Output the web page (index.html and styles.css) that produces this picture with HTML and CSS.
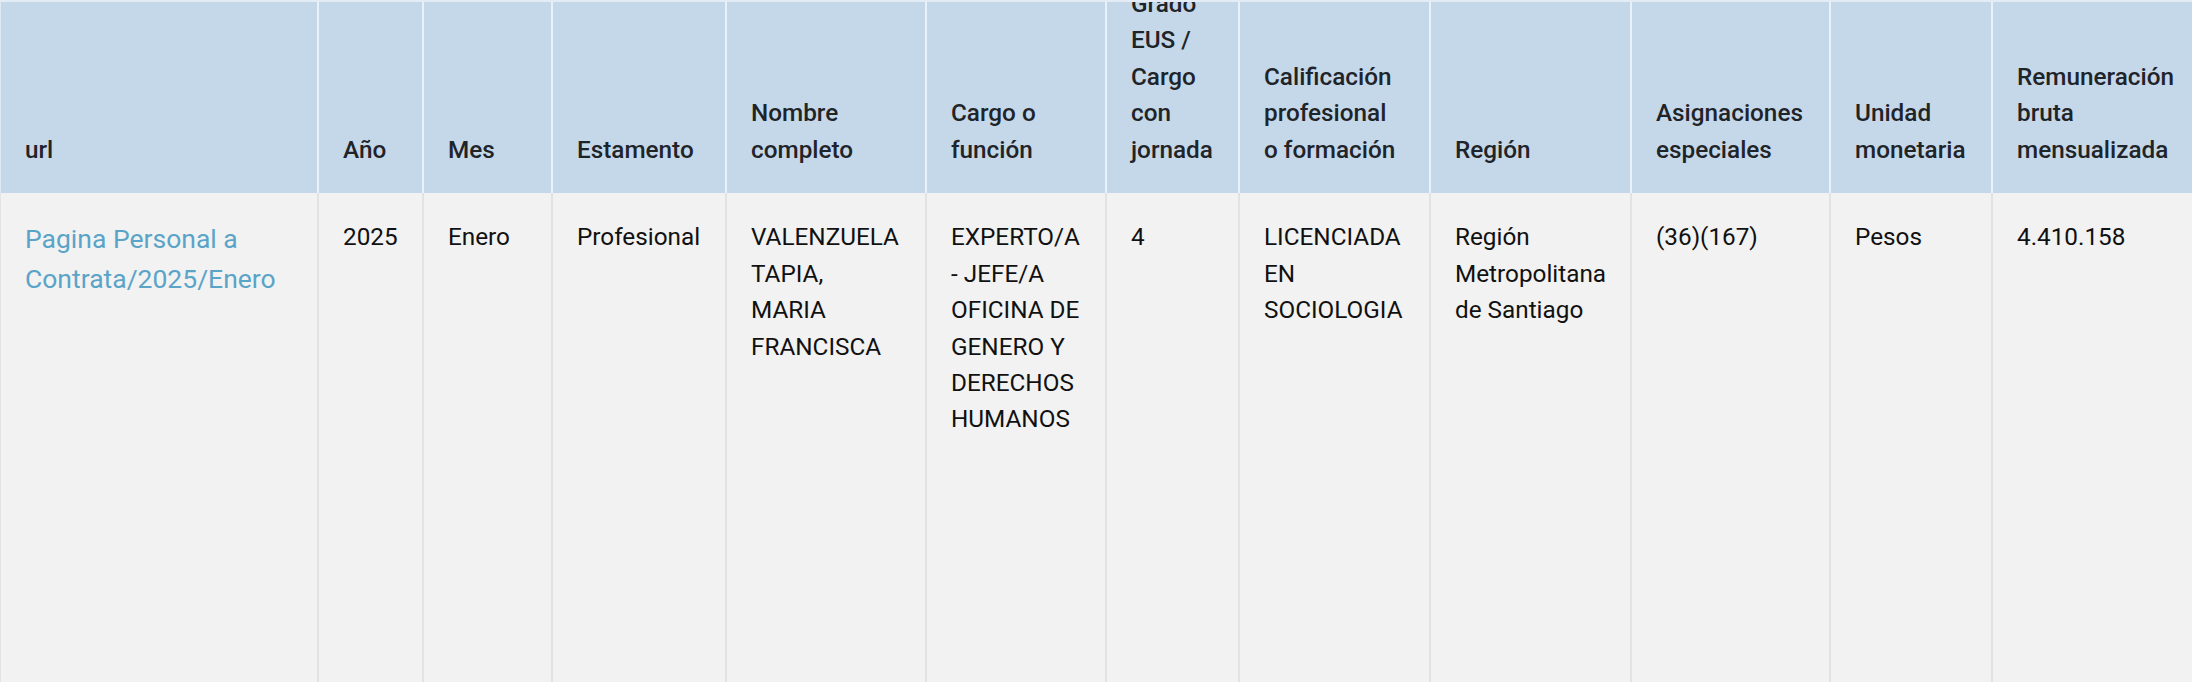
FILE: index.html
```html
<!DOCTYPE html>
<html lang="es">
<head>
<meta charset="utf-8">
<title>Personal a Contrata</title>
<link rel="stylesheet" href="styles.css">
</head>
<body>
<div class="table-wrap">
  <table class="data-table">
    <colgroup>
      <col class="c-url">
      <col class="c-anio">
      <col class="c-mes">
      <col class="c-estamento">
      <col class="c-nombre">
      <col class="c-cargo">
      <col class="c-grado">
      <col class="c-calif">
      <col class="c-region">
      <col class="c-asig">
      <col class="c-unidad">
      <col class="c-remu">
    </colgroup>
    <thead>
      <tr>
        <th>url</th>
        <th>Año</th>
        <th>Mes</th>
        <th>Estamento</th>
        <th>Nombre completo</th>
        <th>Cargo o función</th>
        <th>Grado EUS / Cargo con jornada</th>
        <th>Calificación profesional o formación</th>
        <th>Región</th>
        <th>Asignaciones especiales</th>
        <th>Unidad monetaria</th>
        <th>Remuneración bruta mensualizada</th>
      </tr>
    </thead>
    <tbody>
      <tr>
        <td><a class="row-link" href="#">Pagina Personal a Contrata/2025/Enero</a></td>
        <td>2025</td>
        <td>Enero</td>
        <td>Profesional</td>
        <td>VALENZUELA TAPIA, MARIA FRANCISCA</td>
        <td>EXPERTO/A - JEFE/A OFICINA DE GENERO Y DERECHOS HUMANOS</td>
        <td>4</td>
        <td>LICENCIADA EN SOCIOLOGIA</td>
        <td>Región Metropolitana de Santiago</td>
        <td>(36)(167)</td>
        <td>Pesos</td>
        <td>4.410.158</td>
      </tr>
    </tbody>
  </table>
</div>
</body>
</html>
```

FILE: styles.css
```css
html, body {
  margin: 0;
  padding: 0;
  background: #f2f2f2;
}

body {
  font-family: Roboto, "Liberation Sans", Arial, sans-serif;
  overflow: hidden;
}

.table-wrap {
  width: 100%;
  height: 682px;
  overflow: hidden;
  border-top: 2px solid #e3ecf5;
  box-sizing: border-box;
}

.data-table {
  table-layout: fixed;
  width: 2231px;
  border-collapse: separate;
  border-spacing: 0;
  margin-top: -40px;
}

.c-url { width: 317px; }
.c-anio { width: 105px; }
.c-mes { width: 129px; }
.c-estamento { width: 174px; }
.c-nombre { width: 200px; }
.c-cargo { width: 180px; }
.c-grado { width: 133px; }
.c-calif { width: 191px; }
.c-region { width: 201px; }
.c-asig { width: 199px; }
.c-unidad { width: 162px; }
.c-remu { width: 240px; }

.data-table th {
  background: #c5d8ea;
  color: #1f2429;
  font-size: 24.3px;
  font-weight: 500;
  line-height: 1.5;
  text-align: left;
  vertical-align: bottom;
  padding: 24px 26px 25px 24px;
  border-left: 2px solid #eaf1f8;
}

.data-table th:first-child {
  border-left: 1px solid #dfe8f1;
}

.data-table td {
  background: #f2f2f2;
  color: #111;
  font-size: 24.3px;
  font-weight: 400;
  line-height: 1.5;
  vertical-align: top;
  padding: 26px 22px 24px 24px;
  border-left: 2px solid #e2e2e2;
  height: 520px;
}

.data-table td:first-child {
  border-left: 1px solid #e2e4e6;
}

.row-link {
  color: #5aa4c8;
  font-size: 26.5px;
  line-height: 1.5;
  text-decoration: none;
}
```
